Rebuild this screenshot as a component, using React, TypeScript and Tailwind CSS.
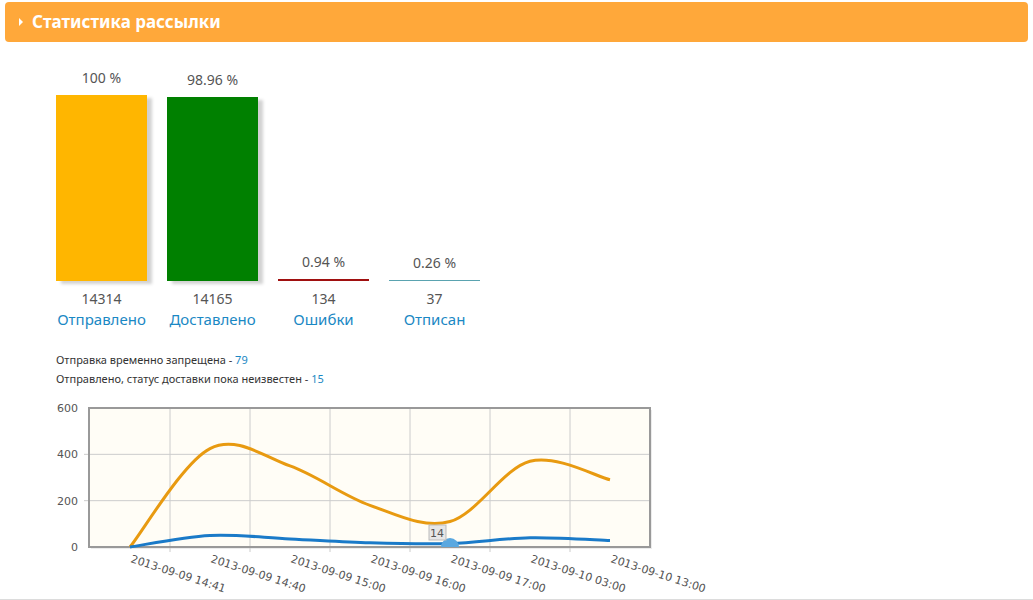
const orange = [[130, 0], [210, 425], [290, 350], [370, 180], [450, 110], [530, 370], [610, 290]]
const blue = [[130, 0], [210, 50], [290, 35], [370, 18], [450, 15], [530, 40], [610, 28]]
const xLabels = ['2013-09-09 14:41', '2013-09-09 14:40', '2013-09-09 15:00', '2013-09-09 16:00', '2013-09-09 17:00', '2013-09-10 03:00', '2013-09-10 13:00']

// chart svg origin: page x 40, y 390
const Y0 = 151
const py = (v: number) => Y0 - v * (139 / 600)

function smooth(pts: number[][]) {
  const p = pts.map(([x, v]) => [x - 40, py(v)])
  let d = `M${p[0][0]},${p[0][1]}`
  for (let i = 0; i < p.length - 1; i++) {
    const p0 = p[i - 1] || p[i]
    const p1 = p[i]
    const p2 = p[i + 1]
    const p3 = p[i + 2] || p2
    const c1 = [p1[0] + (p2[0] - p0[0]) / 6, p1[1] + (p2[1] - p0[1]) / 6]
    const c2 = [p2[0] - (p3[0] - p1[0]) / 6, p2[1] - (p3[1] - p1[1]) / 6]
    d += ` C${c1[0]},${c1[1]} ${c2[0]},${c2[1]} ${p2[0]},${p2[1]}`
  }
  return d
}

const bars = [
  { pct: '100 %', n: '14314', label: 'Отправлено', h: 186, color: 'bg-[#ffb600]', shadow: true },
  { pct: '98.96 %', n: '14165', label: 'Доставлено', h: 184, color: 'bg-[#008000]', shadow: true },
  { pct: '0.94 %', n: '134', label: 'Ошибки', h: 2, color: 'bg-[#a01010]', shadow: false },
  { pct: '0.26 %', n: '37', label: 'Отписан', h: 1, color: 'bg-[#5aa3b0]', shadow: false },
]

export default function App() {
  return (
    <div className="w-[1033px] h-[600px] bg-white overflow-hidden font-['Liberation_Sans',Arial,sans-serif] border-b border-[#dcdcdc]">
      <div className="mx-[5px] mt-[2px] h-[40px] bg-[#ffa83a] rounded-[4px] flex items-center px-[14px] gap-[9px]">
        <span className="w-0 h-0 border-y-[4px] border-y-transparent border-l-[4px] border-l-white" />
        <span className="text-white font-bold text-[17px]">Статистика рассылки</span>
      </div>

      <div className="flex gap-[20px] ml-[56px] mt-[25px] items-end h-[214px]">
        {bars.map((b) => (
          <div key={b.n} className="w-[91px] flex flex-col items-center">
            <div className="text-[14px] text-[#555] font-['DejaVu_Sans',sans-serif] mb-[7px]">{b.pct}</div>
            <div
              className={`w-full ${b.color} ${b.shadow ? 'shadow-[5px_3px_3px_rgba(0,0,0,0.18)]' : ''}`}
              style={{ height: b.h }}
            />
          </div>
        ))}
      </div>
      <div className="flex gap-[20px] ml-[56px] mt-[8px]">
        {bars.map((b) => (
          <div key={b.n} className="w-[91px] flex flex-col items-center leading-[20px]">
            <div className="text-[14px] text-[#555] font-['DejaVu_Sans',sans-serif]">{b.n}</div>
            <div className="text-[15px] text-[#1a88c4]">{b.label}</div>
          </div>
        ))}
      </div>

      <div className="ml-[56px] mt-[21px] text-[11px] text-[#333] leading-[19px]">
        <div>Отправка временно запрещена - <span className="text-[#1a88c4]">79</span></div>
        <div>Отправлено, статус доставки пока неизвестен - <span className="text-[#1a88c4]">15</span></div>
      </div>

      <svg width="700" height="210" className="ml-[40px] mt-[8px] block" fontFamily="'DejaVu Sans', sans-serif">
        <rect x="51" y="14" width="561" height="139" fill="#e0e0e0" opacity="0.6" />
        <rect x="49" y="12" width="561" height="139" fill="#fffdf6" />
        {[170, 250, 330, 410, 490, 570].map((x) => (
          <line key={x} x1={x - 40} x2={x - 40} y1="12" y2="156" stroke="#cccccc" />
        ))}
        {[200, 400].map((v) => (
          <line key={v} x1="44" x2="610" y1={py(v)} y2={py(v)} stroke="#cccccc" />
        ))}
        <rect x="49" y="12" width="561" height="139" fill="none" stroke="#999" strokeWidth="2" />
        {[0, 200, 400, 600].map((v) => (
          <text key={v} x="38" y={py(v) + 4} fontSize="11" fill="#555" textAnchor="end">{v}</text>
        ))}
        <path d={smooth(orange)} fill="none" stroke="#e89a10" strokeWidth="3" />
        <path d={smooth(blue)} fill="none" stroke="#1a7ac8" strokeWidth="3" />
        <path d="M401,151 A9,9 0 0 1 419,151 Z" fill="#5aa8e0" />
        <rect x="389" y="129" width="17" height="15" fill="#e6e6e6" stroke="#bbb" />
        <text x="397" y="141" fontSize="11" fill="#555" textAnchor="middle">14</text>
        {xLabels.map((l, i) => (
          <text key={i} x={90 + i * 80} y="166" fontSize="11" fill="#555" transform={`rotate(18 ${90 + i * 80} 166)`}>{l}</text>
        ))}
      </svg>
    </div>
  )
}
